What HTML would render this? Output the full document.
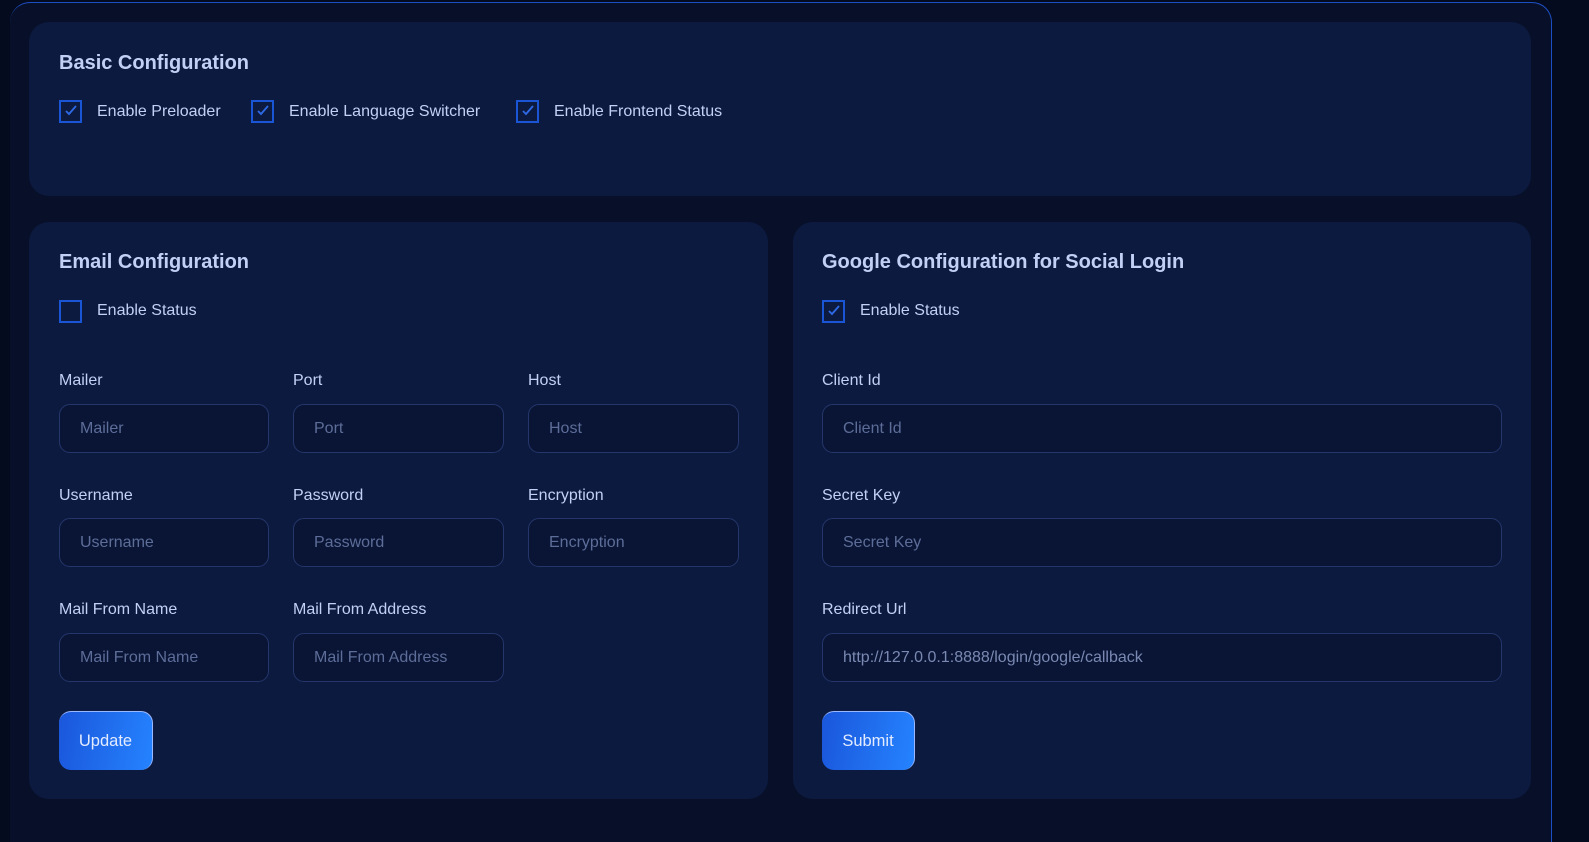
<!DOCTYPE html>
<html><head><meta charset="utf-8"><style>
*{box-sizing:border-box;margin:0;padding:0}
html,body{width:1589px;height:829px;overflow:hidden;background:#050b1f;font-family:"Liberation Sans",sans-serif}
.outer{position:absolute;left:10px;top:2px;width:1542px;height:840px;background:#081029;border-top:1px solid #1d4fc4;border-right:1px solid #1d4fc4;border-top-right-radius:20px;border-top-left-radius:20px}
.card{position:absolute;background:#0c1a40;border-radius:20px}
h2{position:absolute;font-size:20px;font-weight:bold;color:#c3d0f5}
.cb{position:absolute;width:23px;height:23px;border:2px solid #1a55d6}
.cb svg{position:absolute;left:3px;top:2px}
.lbl{position:absolute;font-size:16px;color:#c3d0f5}
.inp{position:absolute;height:49px;border:1px solid #24366a;border-radius:11px;background:#0a1535;color:#5d6d99;font-size:16px;padding-left:20px;line-height:47px}
.btn{position:absolute;height:59px;border-radius:12px;background:linear-gradient(100deg,#1a56db,#2583ff);color:#e3ecff;font-size:16.5px;text-align:center;line-height:59px;border-top:1px solid #9ab8ff;border-right:1px solid #9ab8ff}
</style></head><body>
<div class="outer"></div>

<div class="card" style="left:29px;top:22px;width:1502px;height:174px"></div>
<h2 style="left:59px;top:52px">Basic Configuration</h2>
<div class="cb" style="left:59px;top:100px"><svg width="14" height="14" viewBox="0 0 14 14"><path d="M2 7l3 3 7-8" stroke="#2f6ae6" stroke-width="1.8" fill="none"/></svg></div>
<div class="lbl" style="left:97px;top:103px">Enable Preloader</div>
<div class="cb" style="left:251px;top:100px"><svg width="14" height="14" viewBox="0 0 14 14"><path d="M2 7l3 3 7-8" stroke="#2f6ae6" stroke-width="1.8" fill="none"/></svg></div>
<div class="lbl" style="left:289px;top:103px">Enable Language Switcher</div>
<div class="cb" style="left:516px;top:100px"><svg width="14" height="14" viewBox="0 0 14 14"><path d="M2 7l3 3 7-8" stroke="#2f6ae6" stroke-width="1.8" fill="none"/></svg></div>
<div class="lbl" style="left:554px;top:103px">Enable Frontend Status</div>

<div class="card" style="left:29px;top:222px;width:739px;height:577px"></div>
<h2 style="left:59px;top:251px">Email Configuration</h2>
<div class="cb" style="left:59px;top:300px"></div>
<div class="lbl" style="left:97px;top:302px">Enable Status</div>
<div class="lbl" style="left:59px;top:372px">Mailer</div>
<div class="lbl" style="left:293px;top:372px">Port</div>
<div class="lbl" style="left:528px;top:372px">Host</div>
<div class="inp" style="left:59px;top:404px;width:210px">Mailer</div>
<div class="inp" style="left:293px;top:404px;width:211px">Port</div>
<div class="inp" style="left:528px;top:404px;width:211px">Host</div>
<div class="lbl" style="left:59px;top:487px">Username</div>
<div class="lbl" style="left:293px;top:487px">Password</div>
<div class="lbl" style="left:528px;top:487px">Encryption</div>
<div class="inp" style="left:59px;top:518px;width:210px">Username</div>
<div class="inp" style="left:293px;top:518px;width:211px">Password</div>
<div class="inp" style="left:528px;top:518px;width:211px">Encryption</div>
<div class="lbl" style="left:59px;top:601px">Mail From Name</div>
<div class="lbl" style="left:293px;top:601px">Mail From Address</div>
<div class="inp" style="left:59px;top:633px;width:210px">Mail From Name</div>
<div class="inp" style="left:293px;top:633px;width:211px">Mail From Address</div>
<div class="btn" style="left:59px;top:711px;width:94px">Update</div>

<div class="card" style="left:793px;top:222px;width:738px;height:577px"></div>
<h2 style="left:822px;top:251px">Google Configuration for Social Login</h2>
<div class="cb" style="left:822px;top:300px"><svg width="14" height="14" viewBox="0 0 14 14"><path d="M2 7l3 3 7-8" stroke="#2f6ae6" stroke-width="1.8" fill="none"/></svg></div>
<div class="lbl" style="left:860px;top:302px">Enable Status</div>
<div class="lbl" style="left:822px;top:372px">Client Id</div>
<div class="inp" style="left:822px;top:404px;width:680px">Client Id</div>
<div class="lbl" style="left:822px;top:487px">Secret Key</div>
<div class="inp" style="left:822px;top:518px;width:680px">Secret Key</div>
<div class="lbl" style="left:822px;top:601px">Redirect Url</div>
<div class="inp" style="left:822px;top:633px;width:680px;color:#7a89b3">http://127.0.0.1:8888/login/google/callback</div>
<div class="btn" style="left:822px;top:711px;width:93px">Submit</div>
</body></html>
